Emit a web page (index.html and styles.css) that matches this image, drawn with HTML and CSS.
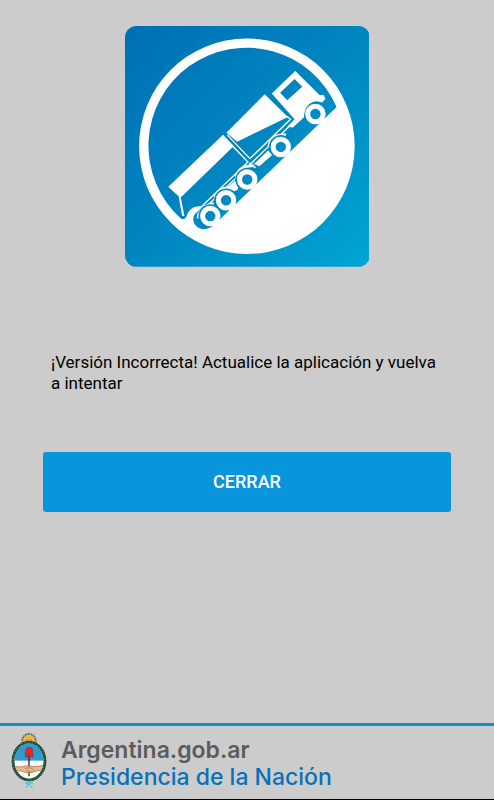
FILE: index.html
```html
<!DOCTYPE html>
<html lang="es">
<head>
    <meta charset="UTF-8">
    <meta name="viewport" content="width=device-width, initial-scale=1">
    <title>Versión incorrecta</title>
    <link rel="stylesheet" href="styles.css">
</head>
<body>
    <main class="contenido">
        <svg class="logo" viewBox="18 19 729 717" role="img" aria-label="Camión">
            <defs>
                <linearGradient id="fondo" x1="0" y1="0" x2="1" y2="1">
                    <stop offset="0" stop-color="#006fb5"/>
                    <stop offset="0.5" stop-color="#0086c1"/>
                    <stop offset="1" stop-color="#00a5d6"/>
                </linearGradient>
                <linearGradient id="cielo" gradientUnits="userSpaceOnUse" x1="18" y1="19" x2="747" y2="736">
                    <stop offset="0" stop-color="#006fb5"/>
                    <stop offset="0.5" stop-color="#0086c1"/>
                    <stop offset="1" stop-color="#00a5d6"/>
                </linearGradient>
            </defs>
            <rect x="18" y="19" width="729" height="717" rx="34" fill="url(#fondo)"/>
            <circle cx="381" cy="377" r="321" fill="#fff"/>
            <!-- cielo -->
            <path fill="url(#cielo)" d="M648 260A292 292 0 1 0 185 593Q197 597 202 584C208 565 222 553 247 556L229 577C212 592 224 624 254 624Q276 622 290 605Z"/>
            <!-- acoplado -->
            <g fill="#fff">
                <path d="M147 498L310 343L342 376L184 530L195 585H188L178 527Z"/>
                <path d="M320 337L434 222L503 290L352 364Z"/>
                <path d="M455 220L525 153L598 225L609 224L615 236L605 247L590 243C567 244 553 260 551 291L518 321L501 319L523 297Z"/>
                <path d="M402 430L444 390L450 396L458 402L418 437Z"/>
                <path d="M326 498L345 480L360 490L352 508L335 514Z"/>
            </g>
            <path fill="url(#cielo)" d="M480 218L523 177L546 200L501 240Z"/>
            <g fill="none" stroke="#fff" stroke-width="4">
                <path d="M323 344L390 414L511 297L500 288"/>
                <path d="M336 374L384 424L226 576"/>
                <path d="M234 582L392 430L518 307"/>
                <path d="M388 426L407 441"/>
            </g>
            <!-- guardabarros -->
            <g fill="none" stroke="#fff" stroke-width="8">
                <path d="M446 377Q456 340 497 343"/>
                <path d="M348 468Q360 432 402 436"/>
                <path d="M285 530Q300 496 337 501"/>
                <path d="M235 592Q240 556 282 548"/>
            </g>
            <g fill="none" stroke="#0084c0" stroke-width="5">
                <path d="M459 403A33 33 0 0 1 506 356"/>
                <path d="M359 500A33 33 0 0 1 406 453"/>
                <path d="M296 562A33 33 0 0 1 343 515"/>
                <path d="M249 609A33 33 0 0 1 296 562"/>
            </g>
            <!-- ruedas -->
            <g fill="url(#cielo)" stroke="#fff" stroke-width="15">
                <circle cx="585" cy="281" r="23"/>
                <circle cx="482" cy="379" r="23"/>
                <circle cx="382" cy="476" r="23"/>
                <circle cx="319" cy="538" r="23"/>
                <circle cx="272" cy="585" r="23"/>
            </g>
        </svg>

        <p class="mensaje">¡Versión Incorrecta! Actualice la aplicación y vuelva a intentar</p>

        <button id="btCerrar" class="boton" type="button">CERRAR</button>
    </main>

    <footer class="pie">
        <svg class="escudo" viewBox="20 8 108 168" role="img" aria-label="Escudo nacional">
            <defs>
                <clipPath id="ovalo"><ellipse cx="74" cy="92" rx="43" ry="53"/></clipPath>
            </defs>
            <circle cx="74" cy="31" r="20" fill="none" stroke="#6b5524" stroke-width="6" stroke-dasharray="3 2"/>
            <circle cx="74" cy="32" r="17" fill="#e8b84a"/>
            <path d="M66 29H71M77 29H82M69 37H79" stroke="#5b4212" stroke-width="2"/>
            <g clip-path="url(#ovalo)">
                <path fill="#2f9bd3" d="M30 35H118V91H30Z"/>
                <path fill="#fff" d="M30 91H118V150H30Z"/>
                <path d="M74 75V138" stroke="#3b241c" stroke-width="4"/>
                <path fill="#e9b78d" stroke="#9d673f" stroke-width="2" d="M28 108L48 110L67 106L78 108L101 108L120 104V117L98 122L80 127L66 127L50 122L28 120Z"/>
                <path fill="none" stroke="#9d673f" stroke-width="2" d="M62 114L78 112L91 122M66 120L80 125"/>
            </g>
            <path fill="#df2929" stroke="#7c2020" stroke-width="1" d="M63 81V67Q62 51 76 50Q87 51 85 64L87 80Q75 76 63 81Z"/>
            <ellipse cx="74" cy="92" rx="48" ry="57" fill="none" stroke="#173f2d" stroke-width="8"/>
            <ellipse cx="74" cy="92" rx="48" ry="57" fill="none" stroke="#3c8054" stroke-width="5" stroke-dasharray="4 4"/>
            <path fill="none" stroke="#5fc0df" stroke-width="4" d="M67 152L80 160L65 171M81 152L68 161L85 171M62 158H86"/>
        </svg>
        <div class="textos">
            <span class="sitio">Argentina.gob.ar</span>
            <span class="area">Presidencia de la Nación</span>
        </div>
    </footer>

    <script>
        const btCerrar = document.getElementById("btCerrar");
        btCerrar.addEventListener("click", function () {
            window.close();
        });
    </script>
</body>
</html>
```
FILE: styles.css
```css
* {
    box-sizing: border-box;
}
body {
    display: flex;
    flex-direction: column;
    min-height: 100vh;
    margin: 0;
    background: #cccccc;
    color: #000;
    font-family: Roboto, "Liberation Sans", sans-serif;
}
.contenido {
    flex: 1;
    display: flex;
    flex-direction: column;
    padding: 26px 43px;
}
.logo {
    display: block;
    width: 60%;
    max-width: 320px;
    align-self: center;
}
.mensaje {
    margin: 85px 8px 58px;
    font-size: 17px;
    line-height: 21px;
}
.boton {
    width: 100%;
    padding: 20px;
    border: none;
    border-radius: 3px;
    background: #0895db;
    color: #fff;
    font-family: inherit;
    font-size: 18px;
    font-weight: 500;
    line-height: 20px;
    cursor: pointer;
}
.pie {
    display: flex;
    align-items: flex-start;
    gap: 14px;
    padding: 7px 11px 8px;
    border-top: 3px solid #148fc6;
    border-bottom: 1px solid #000;
}
.escudo {
    width: 36px;
    height: 56px;
}
.textos {
    display: flex;
    flex-direction: column;
    padding-top: 4px;
    font-family: Inter, "Open Sans", sans-serif;
    font-size: 23px;
    font-weight: 600;
    line-height: 27px;
}
.sitio {
    color: #5c5c5c;
}
.area {
    color: #0a70b8;
    font-weight: 500;
}
```
